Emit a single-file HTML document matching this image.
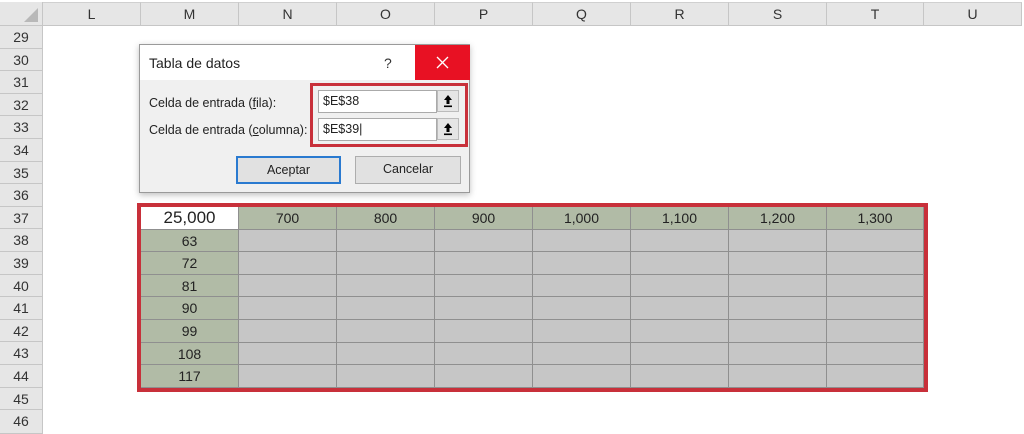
<!DOCTYPE html><html><head><style>
body{margin:0;width:1024px;height:434px;overflow:hidden;background:#fff;font-family:"Liberation Sans",sans-serif;position:relative}
div{position:absolute;box-sizing:border-box}
.ch{top:2px;height:24px;background:#e6e6e6;border-right:1px solid #c6c6c6;border-bottom:1px solid #c6c6c6;border-top:1px solid #d0d0d0;text-align:center;font-size:14px;line-height:23px;color:#333}
.rh{left:0;width:43px;background:#e6e6e6;border-bottom:1px solid #c6c6c6;border-right:1px solid #c6c6c6;text-align:center;font-size:14px;color:#333}
.c{border-right:1px solid #8f8f8f;border-bottom:1px solid #8f8f8f;text-align:center;font-size:14px;color:#222}
.g{background:#b1bba6}.x{background:#c6c6c6}
.lbl{font-size:12.5px;color:#222}
.inp{background:#fff;border:1px solid #aaa;font-size:12.5px;padding-left:4px;line-height:21px;color:#222}
.btn{width:22px;height:22px;background:#e5e5e5;border:1px solid #bbb}
.b{background:#e1e1e1;border:1px solid #adadad;font-size:12.5px;text-align:center;line-height:25px;color:#222}
</style></head><body>
<div style="left:0;top:2px;width:43px;height:24px;background:#e6e6e6;border-right:1px solid #c6c6c6;border-bottom:1px solid #c6c6c6"><svg width="43" height="24" style="position:absolute;left:0;top:0"><polygon points="38,6 38,20 24,20" fill="#b8b8b8"/></svg></div>
<div class="ch" style="left:43px;width:98px">L</div>
<div class="ch" style="left:141px;width:98px">M</div>
<div class="ch" style="left:239px;width:98px">N</div>
<div class="ch" style="left:337px;width:98px">O</div>
<div class="ch" style="left:435px;width:98px">P</div>
<div class="ch" style="left:533px;width:98px">Q</div>
<div class="ch" style="left:631px;width:98px">R</div>
<div class="ch" style="left:729px;width:98px">S</div>
<div class="ch" style="left:827px;width:97px">T</div>
<div class="ch" style="left:924px;width:98px">U</div>
<div class="rh" style="top:26px;height:22.6px;line-height:22px">29</div>
<div class="rh" style="top:48.6px;height:22.6px;line-height:22px">30</div>
<div class="rh" style="top:71.2px;height:22.6px;line-height:22px">31</div>
<div class="rh" style="top:93.8px;height:22.6px;line-height:22px">32</div>
<div class="rh" style="top:116.4px;height:22.6px;line-height:22px">33</div>
<div class="rh" style="top:139px;height:22.6px;line-height:22px">34</div>
<div class="rh" style="top:161.6px;height:22.6px;line-height:22px">35</div>
<div class="rh" style="top:184.2px;height:22.6px;line-height:22px">36</div>
<div class="rh" style="top:206.8px;height:22.6px;line-height:22px">37</div>
<div class="rh" style="top:229.4px;height:22.6px;line-height:22px">38</div>
<div class="rh" style="top:252px;height:22.6px;line-height:22px">39</div>
<div class="rh" style="top:274.6px;height:22.6px;line-height:22px">40</div>
<div class="rh" style="top:297.2px;height:22.6px;line-height:22px">41</div>
<div class="rh" style="top:319.8px;height:22.6px;line-height:22px">42</div>
<div class="rh" style="top:342.4px;height:22.6px;line-height:22px">43</div>
<div class="rh" style="top:365px;height:22.6px;line-height:22px">44</div>
<div class="rh" style="top:387.6px;height:22.6px;line-height:22px">45</div>
<div class="rh" style="top:410.2px;height:23.8px;line-height:22px">46</div>

<div style="left:137px;top:203px;width:791px;height:189px;border:4px solid #c8303a;background:#c6c6c6"></div>
<div id="t" style="left:141px;top:207px;width:783px;height:181px">
</div>
<script>
var t=document.getElementById('t'),h='';
var hd=['25,000','700','800','900','1,000','1,100','1,200','1,300'],rv=['63','72','81','90','99','108','117'];
for(var r=0;r<8;r++){for(var c=0;c<8;c++){
var y=r*22.6,x=c*98,w=c==7?85+98-98+0:98;if(c==7)w=783-686;
var cls='c '+(r==0||c==0?'g':'x');var txt='';var st='';
if(r==0){txt=hd[c];if(c==0){st='background:#fff;font-size:17px;'}}
else if(c==0)txt=rv[r-1];
h+='<div class="'+cls+'" style="left:'+x+'px;top:'+y+'px;width:'+w+'px;height:22.6px;line-height:22px;'+st+'">'+txt+'</div>';}}
t.innerHTML=h;
</script>

<div style="left:139px;top:44px;width:331px;height:149px;background:#f0f0f0;border:1px solid #9a9a9a;box-shadow:0 2px 6px rgba(0,0,0,.25)">
<div style="left:0;top:0;width:329px;height:35px;background:#fff"></div>
<div style="left:9px;top:10px;font-size:14px;color:#222">Tabla de datos</div>
<div style="left:244px;top:10px;font-size:14px;color:#333">?</div>
<div style="left:275px;top:0;width:55px;height:35px;background:#e81123"><svg width="55" height="35"><path d="M22 12 L33 23 M33 12 L22 23" stroke="#fff" stroke-width="1.3"/></svg></div>
<div class="lbl" style="left:9px;top:51px">Celda de entrada (<u>f</u>ila):</div>
<div class="lbl" style="left:9px;top:78px">Celda de entrada (<u>c</u>olumna):</div>
<div style="left:170px;top:38px;width:158px;height:64px;border:3px solid #c8303a"></div>
<div class="inp" style="left:178px;top:45px;width:119px;height:23px">$E$38</div>
<div class="btn" style="left:297px;top:45px"><svg width="20" height="20"><path d="M10 4 L6 9 H8.5 V13 H11.5 V9 H14 Z" fill="#000"/><rect x="6" y="14.5" width="8" height="1.6" fill="#000"/></svg></div>
<div class="inp" style="left:178px;top:73px;width:119px;height:23px">$E$39|</div>
<div class="btn" style="left:297px;top:73px"><svg width="20" height="20"><path d="M10 4 L6 9 H8.5 V13 H11.5 V9 H14 Z" fill="#000"/><rect x="6" y="14.5" width="8" height="1.6" fill="#000"/></svg></div>
<div class="b" style="left:96px;top:111px;width:105px;height:28px;border:2px solid #2a7ad0;line-height:24px">Aceptar</div>
<div class="b" style="left:215px;top:111px;width:106px;height:28px">Cancelar</div>
</div>
</body></html>
